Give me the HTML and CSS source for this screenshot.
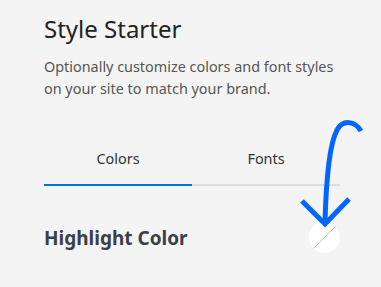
FILE: index.html
```html
<!DOCTYPE html>
<html>
<head>
<meta charset="utf-8">
<link rel="stylesheet" href="styles.css">
</head>
<body>
<main class="panel">
  <h1 class="title">Style Starter</h1>
  <p class="intro">Optionally customize colors and font styles on your site to match your brand.</p>
  <nav class="tabs">
    <div class="tab active">Colors</div>
    <div class="tab">Fonts</div>
  </nav>
  <div class="row">
    <h2 class="label">Highlight Color</h2>
    <div class="swatch"></div>
  </div>
</main>
<svg class="arrow" width="381" height="287" viewBox="0 0 381 287">
  <path d="M361,131 C355,121 343,119 337,130 C329,145 326,185 325,222" fill="none" stroke="#0066ff" stroke-width="5"/>
  <path d="M302,201 L325,224 L349,199" fill="none" stroke="#0066ff" stroke-width="5"/>
</svg>
</body>
</html>
```
FILE: styles.css
```css
html, body {
  margin: 0;
  padding: 0;
  background: #f4f4f4;
  width: 381px;
  height: 287px;
  overflow: hidden;
}
body {
  position: relative;
  font-family: "Noto Sans", "Open Sans", sans-serif;
}
.panel {
  width: 296px;
  padding: 11px 0 0 44px;
}
.title {
  margin: 0;
  font-size: 24px;
  font-weight: 400;
  color: #222;
  line-height: 36px;
}
.intro {
  margin: 9px 0 0;
  font-size: 14.4px;
  line-height: 22px;
  color: #555;
}
.tabs {
  display: flex;
  margin-top: 49px;
}
.tab {
  flex: 1;
  text-align: center;
  font-size: 14.4px;
  color: #333;
  line-height: 20px;
  padding-bottom: 15px;
  border-bottom: 2px solid #dedede;
}
.tab.active {
  border-bottom-color: #0070e0;
}
.row {
  display: flex;
  align-items: center;
  justify-content: space-between;
  margin-top: 36px;
}
.label {
  margin: 0;
  font-size: 19px;
  font-weight: 700;
  color: #3b4048;
}
.swatch {
  width: 31px;
  height: 31px;
  border-radius: 50%;
  background: linear-gradient(135deg, #fff 48.5%, #c4c4c4 49.5%, #c4c4c4 50.5%, #fff 51.5%);
}
.arrow {
  position: absolute;
  left: 0;
  top: 0;
}
```
